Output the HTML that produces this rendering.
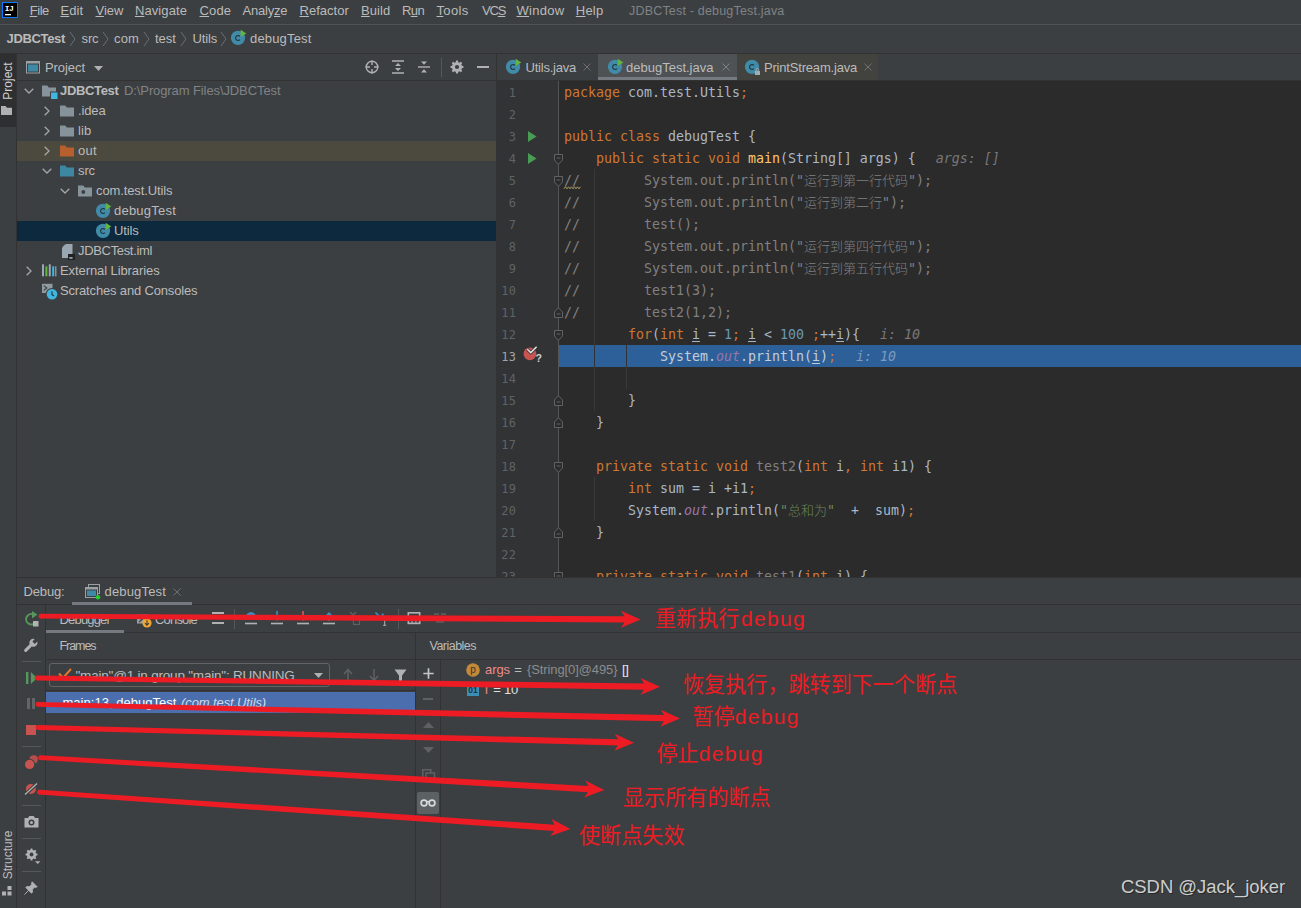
<!DOCTYPE html>
<html lang="zh">
<head>
<meta charset="utf-8">
<title>JDBCTest - debugTest.java</title>
<style>
html,body{margin:0;padding:0;}
body{width:1301px;height:908px;overflow:hidden;background:#3c3f41;position:relative;
 font-family:"Liberation Sans","Noto Sans CJK SC",sans-serif;font-size:13px;color:#bbbbbb;}
.abs{position:absolute;}
.t{position:absolute;white-space:pre;line-height:16px;height:16px;}
.t u{text-decoration:underline;text-underline-offset:1px;text-decoration-thickness:1px;}
svg{position:absolute;overflow:visible;}
.hl{position:absolute;height:1px;}
.vl{position:absolute;width:1px;}
.row{position:absolute;left:17px;width:479px;height:20px;}
#editor{left:496px;top:81px;width:805px;height:496px;background:#2b2b2b;overflow:hidden;}
#gutter{left:0;top:0;width:62px;height:496px;background:#313335;}
.ln{transform:scaleX(0.94);transform-origin:100% 50%;position:absolute;left:0;width:20.3px;letter-spacing:0.3px;text-align:right;font-family:"DejaVu Sans Mono","Liberation Mono",monospace;font-size:12.7px;color:#606366;line-height:22px;height:22px;white-space:pre;}
.cl{position:absolute;left:68px;white-space:pre;font-family:"DejaVu Sans Mono","Liberation Mono","Noto Sans CJK SC",monospace;font-size:13.29px;line-height:22px;height:22px;color:#a9b7c6;}
.cl b{font-weight:300;font-size:13px;}
.k{color:#cc7832;}
.s{color:#6a8759;}
.n{color:#6897bb;}
.c{color:#808080;}
.h{color:#787878;font-style:italic;}
.f{color:#9876aa;font-style:italic;}
.g{color:#808080;}
.m{color:#ffc66d;}
.u{text-decoration:underline;text-underline-offset:2px;}

</style>
</head>
<body>
<div class="abs" style="left:0;top:0;width:1301px;height:24px;background:#3c3f41;"></div>
<svg style="left:2px;top:2px" width="16" height="16" viewBox="0 0 16 16"><rect x="0.5" y="0.5" width="15" height="15" fill="#000" stroke="#087cfa" stroke-width="1"/><rect x="3" y="12" width="6" height="1.3" fill="#fff"/><text x="2.8" y="8.8" font-family="Liberation Mono,monospace" font-weight="bold" font-size="8" letter-spacing="-0.6" fill="#fff">IJ</text></svg>
<span class="t" style="left:29.7px;top:2.5px;font-size:13px;color:#bbbbbb;letter-spacing:-0.44px;"><u>F</u>ile</span>
<span class="t" style="left:60.4px;top:2.5px;font-size:13px;color:#bbbbbb;letter-spacing:0.12px;"><u>E</u>dit</span>
<span class="t" style="left:95.5px;top:2.5px;font-size:13px;color:#bbbbbb;letter-spacing:-0.04px;"><u>V</u>iew</span>
<span class="t" style="left:134.9px;top:2.5px;font-size:13px;color:#bbbbbb;letter-spacing:0.11px;"><u>N</u>avigate</span>
<span class="t" style="left:199.5px;top:2.5px;font-size:13px;color:#bbbbbb;letter-spacing:0.13px;"><u>C</u>ode</span>
<span class="t" style="left:242.5px;top:2.5px;font-size:13px;color:#bbbbbb;letter-spacing:-0.21px;">Analy<u>z</u>e</span>
<span class="t" style="left:299.5px;top:2.5px;font-size:13px;color:#bbbbbb;letter-spacing:0.03px;"><u>R</u>efactor</span>
<span class="t" style="left:361.0px;top:2.5px;font-size:13px;color:#bbbbbb;letter-spacing:0.08px;"><u>B</u>uild</span>
<span class="t" style="left:402.0px;top:2.5px;font-size:13px;color:#bbbbbb;letter-spacing:-0.62px;">R<u>u</u>n</span>
<span class="t" style="left:436.5px;top:2.5px;font-size:13px;color:#bbbbbb;letter-spacing:0.35px;"><u>T</u>ools</span>
<span class="t" style="left:482.0px;top:2.5px;font-size:13px;color:#bbbbbb;letter-spacing:-1.14px;">VC<u>S</u></span>
<span class="t" style="left:516.5px;top:2.5px;font-size:13px;color:#bbbbbb;letter-spacing:0.26px;"><u>W</u>indow</span>
<span class="t" style="left:575.8px;top:2.5px;font-size:13px;color:#bbbbbb;letter-spacing:0.19px;"><u>H</u>elp</span>
<span class="t" style="left:629.0px;top:2.5px;font-size:12.5px;color:#7f8385;letter-spacing:0.19px;">JDBCTest - debugTest.java</span>
<div class="hl" style="left:0;top:24px;width:1301px;background:#515456;"></div>
<span class="t" style="left:6.5px;top:30.5px;font-size:13px;color:#bbbbbb;letter-spacing:-0.33px;font-weight:bold;">JDBCTest</span>
<svg style="left:69px;top:30.5px" width="7" height="16" viewBox="0 0 7 16"><path d="M1 1 L6 8 L1 15" fill="none" stroke="#6b6e70" stroke-width="1"/></svg>
<span class="t" style="left:81.5px;top:30.5px;font-size:13px;color:#bbbbbb;letter-spacing:-0.11px;">src</span>
<svg style="left:101.5px;top:30.5px" width="7" height="16" viewBox="0 0 7 16"><path d="M1 1 L6 8 L1 15" fill="none" stroke="#6b6e70" stroke-width="1"/></svg>
<span class="t" style="left:114.0px;top:30.5px;font-size:13px;color:#bbbbbb;letter-spacing:0.15px;">com</span>
<svg style="left:143px;top:30.5px" width="7" height="16" viewBox="0 0 7 16"><path d="M1 1 L6 8 L1 15" fill="none" stroke="#6b6e70" stroke-width="1"/></svg>
<span class="t" style="left:155.0px;top:30.5px;font-size:13px;color:#bbbbbb;letter-spacing:0.01px;">test</span>
<svg style="left:180px;top:30.5px" width="7" height="16" viewBox="0 0 7 16"><path d="M1 1 L6 8 L1 15" fill="none" stroke="#6b6e70" stroke-width="1"/></svg>
<span class="t" style="left:192.5px;top:30.5px;font-size:13px;color:#bbbbbb;letter-spacing:-0.16px;">Utils</span>
<svg style="left:220px;top:30.5px" width="7" height="16" viewBox="0 0 7 16"><path d="M1 1 L6 8 L1 15" fill="none" stroke="#6b6e70" stroke-width="1"/></svg>
<svg style="left:230px;top:30.2px" width="17" height="17" viewBox="0 0 17 17"><circle cx="8" cy="7.85" r="7.15" fill="#3f8ba8"/><path d="M9.95 6.45 A2.45 2.45 0 1 0 9.95 9.55" fill="none" stroke="#243842" stroke-width="1.15"/><path d="M10.7 -0.2 L16.3 3.4 L10.7 7 Z" fill="#62b543"/></svg>
<span class="t" style="left:250.0px;top:30.5px;font-size:13px;color:#bbbbbb;letter-spacing:0.17px;">debugTest</span>
<div class="hl" style="left:0;top:53px;width:1301px;background:#323232;"></div>
<div class="abs" style="left:0;top:54px;width:17px;height:854px;background:#3c3f41;"></div>
<div class="abs" style="left:0;top:54px;width:16px;height:73px;background:#2d2f30;"></div>
<div class="vl" style="left:16px;top:54px;height:854px;background:#323232;"></div>
<span class="t" style="left:-22.5px;top:73px;width:60px;text-align:center;font-size:12px;color:#d0d0d0;transform:rotate(-90deg);">Project</span>
<svg style="left:1px;top:106px" width="12" height="9" viewBox="0 0 12 9"><path d="M0 0 H4.5 L6 1.8 H11 V9 H0 Z" fill="#afb1b3"/></svg>
<span class="t" style="left:-27.5px;top:847.3px;width:70px;text-align:center;font-size:12px;color:#bbbbbb;transform:rotate(-90deg);">Structure</span>
<svg style="left:2px;top:885.5px" width="10" height="10" viewBox="0 0 10 10"><rect x="0" y="5.5" width="4" height="4" fill="#afb1b3"/><rect x="5.5" y="5.5" width="4" height="4" fill="#afb1b3"/><rect x="5.5" y="0" width="4" height="4" fill="#afb1b3"/></svg>
<div class="abs" style="left:17px;top:54px;width:479px;height:26px;background:#3c3f41;"></div>
<svg style="left:26px;top:61px" width="14" height="13" viewBox="0 0 14 13"><rect x="0.5" y="0.5" width="13" height="11.5" fill="#3c3f41" stroke="#9aa0a4" stroke-width="1"/><rect x="0.5" y="0.5" width="13" height="2" fill="#9aa0a4"/><rect x="2" y="3.5" width="10" height="7" fill="#3d89a6"/></svg>
<span class="t" style="left:45.0px;top:60.0px;font-size:13px;color:#bbbbbb;letter-spacing:-0.07px;">Project</span>
<svg style="left:94px;top:65.7px" width="9" height="5" viewBox="0 0 9 5"><path d="M0 0 H9 L4.5 5 Z" fill="#afb1b3"/></svg>
<svg style="left:365px;top:60px" width="14" height="14" viewBox="0 0 14 14"><circle cx="7" cy="7" r="5.8" fill="none" stroke="#afb1b3" stroke-width="1.4"/><path d="M7 0.5 V5 M7 9 V13.5 M0.5 7 H5 M9 7 H13.5" stroke="#afb1b3" stroke-width="1.4"/></svg>
<svg style="left:391px;top:60px" width="14" height="14" viewBox="0 0 14 14"><path d="M1 1 H13 M1 13 H13" stroke="#afb1b3" stroke-width="1.4"/><path d="M4 6 L7 3 L10 6 Z M4 8 L7 11 L10 8 Z" fill="#afb1b3"/></svg>
<svg style="left:417px;top:60px" width="14" height="14" viewBox="0 0 14 14"><path d="M1 7 H13" stroke="#afb1b3" stroke-width="1.4"/><path d="M4 1.5 L7 4.8 L10 1.5 Z M4 12.5 L7 9.2 L10 12.5 Z" fill="#afb1b3"/></svg>
<div class="vl" style="left:441px;top:58px;height:19px;background:#555759;"></div>
<svg style="left:450px;top:60px" width="14" height="14" viewBox="0 0 14 14"><path d="M6.1 0.6 h1.8 l0.35 1.55 a5 5 0 0 1 1.3 0.55 l1.35-0.85 1.27 1.27 -0.85 1.35 a5 5 0 0 1 0.55 1.3 l1.55 0.35 v1.8 l-1.55 0.35 a5 5 0 0 1 -0.55 1.3 l0.85 1.35 -1.27 1.27 -1.35-0.85 a5 5 0 0 1 -1.3 0.55 l-0.35 1.55 h-1.8 l-0.35-1.55 a5 5 0 0 1 -1.3-0.55 l-1.35 0.85 -1.27-1.27 0.85-1.35 a5 5 0 0 1 -0.55-1.3 l-1.55-0.35 v-1.8 l1.55-0.35 a5 5 0 0 1 0.55-1.3 l-0.85-1.35 1.27-1.27 1.35 0.85 a5 5 0 0 1 1.3-0.55 Z M7 4.9 a2.1 2.1 0 1 0 0 4.2 a2.1 2.1 0 1 0 0 -4.2 Z" fill="#afb1b3" fill-rule="evenodd"/></svg>
<div class="abs" style="left:477px;top:66px;width:12px;height:2px;background:#afb1b3;"></div>
<div class="hl" style="left:17px;top:80px;width:479px;background:#323232;"></div>
<div class="abs" style="left:17px;top:141px;width:479px;height:20px;background:#4c493e;"></div>
<div class="abs" style="left:17px;top:221px;width:479px;height:20px;background:#0d293e;"></div>
<svg style="left:24px;top:88px" width="10" height="6" viewBox="0 0 10 6"><path d="M0.7 0.7 L5 5 L9.3 0.7" fill="none" stroke="#a4a6a8" stroke-width="1.3"/></svg>
<svg style="left:41.5px;top:85px" width="14" height="12" viewBox="0 0 14 12"><path d="M0 0.5 H5.2 L6.8 2.5 H14 V11.5 H0 Z" fill="#87939a"/><rect x="8" y="6.5" width="7.5" height="7.5" fill="#3c3f41"/><rect x="9" y="7.5" width="6.5" height="6.5" fill="#40b6e0"/></svg>
<span class="t" style="left:60.0px;top:83.0px;font-size:13px;color:#bbbbbb;letter-spacing:-0.33px;font-weight:bold;">JDBCTest</span>
<span class="t" style="left:124.0px;top:83.0px;font-size:13px;color:#808385;letter-spacing:-0.10px;">D:\Program Files\JDBCTest</span>
<svg style="left:43.5px;top:106px" width="6" height="10" viewBox="0 0 6 10"><path d="M0.7 0.7 L5 5 L0.7 9.3" fill="none" stroke="#a4a6a8" stroke-width="1.3"/></svg>
<svg style="left:60px;top:105px" width="14" height="12" viewBox="0 0 14 12"><path d="M0 0.5 H5.2 L6.8 2.5 H14 V11.5 H0 Z" fill="#87939a"/></svg>
<span class="t" style="left:78.0px;top:103.0px;font-size:13px;color:#bbbbbb;letter-spacing:-0.14px;">.idea</span>
<svg style="left:43.5px;top:126px" width="6" height="10" viewBox="0 0 6 10"><path d="M0.7 0.7 L5 5 L0.7 9.3" fill="none" stroke="#a4a6a8" stroke-width="1.3"/></svg>
<svg style="left:60px;top:125px" width="14" height="12" viewBox="0 0 14 12"><path d="M0 0.5 H5.2 L6.8 2.5 H14 V11.5 H0 Z" fill="#87939a"/></svg>
<span class="t" style="left:78.0px;top:123.0px;font-size:13px;color:#bbbbbb;letter-spacing:0.16px;">lib</span>
<svg style="left:43.5px;top:146px" width="6" height="10" viewBox="0 0 6 10"><path d="M0.7 0.7 L5 5 L0.7 9.3" fill="none" stroke="#a4a6a8" stroke-width="1.3"/></svg>
<svg style="left:60px;top:145px" width="14" height="12" viewBox="0 0 14 12"><path d="M0 0.5 H5.2 L6.8 2.5 H14 V11.5 H0 Z" fill="#b85f2e"/></svg>
<span class="t" style="left:78.0px;top:143.0px;font-size:13px;color:#bbbbbb;letter-spacing:0.31px;">out</span>
<svg style="left:42px;top:168px" width="10" height="6" viewBox="0 0 10 6"><path d="M0.7 0.7 L5 5 L9.3 0.7" fill="none" stroke="#a4a6a8" stroke-width="1.3"/></svg>
<svg style="left:60px;top:165px" width="14" height="12" viewBox="0 0 14 12"><path d="M0 0.5 H5.2 L6.8 2.5 H14 V11.5 H0 Z" fill="#3d87a3"/></svg>
<span class="t" style="left:78.0px;top:163.0px;font-size:13px;color:#bbbbbb;letter-spacing:-0.11px;">src</span>
<svg style="left:60px;top:188px" width="10" height="6" viewBox="0 0 10 6"><path d="M0.7 0.7 L5 5 L9.3 0.7" fill="none" stroke="#a4a6a8" stroke-width="1.3"/></svg>
<svg style="left:78px;top:185px" width="14" height="12" viewBox="0 0 14 12"><path d="M0 0.5 H5.2 L6.8 2.5 H14 V11.5 H0 Z" fill="#87939a"/><circle cx="5.3" cy="7" r="1.9" fill="#3c3f41"/></svg>
<span class="t" style="left:96.0px;top:183.0px;font-size:13px;color:#bbbbbb;letter-spacing:-0.11px;">com.test.Utils</span>
<svg style="left:95px;top:203px" width="17" height="17" viewBox="0 0 17 17"><circle cx="8" cy="7.85" r="7.15" fill="#3f8ba8"/><path d="M9.95 6.45 A2.45 2.45 0 1 0 9.95 9.55" fill="none" stroke="#243842" stroke-width="1.15"/><path d="M10.7 -0.2 L16.3 3.4 L10.7 7 Z" fill="#62b543"/></svg>
<span class="t" style="left:114.0px;top:203.0px;font-size:13px;color:#bbbbbb;letter-spacing:0.22px;">debugTest</span>
<svg style="left:95px;top:223px" width="17" height="17" viewBox="0 0 17 17"><circle cx="8" cy="7.85" r="7.15" fill="#3f8ba8"/><path d="M9.95 6.45 A2.45 2.45 0 1 0 9.95 9.55" fill="none" stroke="#243842" stroke-width="1.15"/><path d="M10.7 -0.2 L16.3 3.4 L10.7 7 Z" fill="#62b543"/></svg>
<span class="t" style="left:114.0px;top:223.0px;font-size:13px;color:#bbbbbb;letter-spacing:-0.16px;">Utils</span>
<svg style="left:61px;top:244px" width="15" height="16" viewBox="0 0 15 16"><path d="M5 0 H11.5 V14 H1 V4 Z" fill="#9aa7b0"/><path d="M4.2 0 V3.2 H1 Z" fill="#9aa7b0" opacity="0.7"/><rect x="7" y="10" width="7" height="6" fill="#1f2224"/><rect x="8.2" y="13.4" width="3.4" height="1.1" fill="#e8e8e8"/></svg>
<span class="t" style="left:78.0px;top:243.0px;font-size:13px;color:#bbbbbb;letter-spacing:-0.33px;">JDBCTest.iml</span>
<svg style="left:25.5px;top:266px" width="6" height="10" viewBox="0 0 6 10"><path d="M0.7 0.7 L5 5 L0.7 9.3" fill="none" stroke="#a4a6a8" stroke-width="1.3"/></svg>
<svg style="left:42px;top:264px" width="15" height="13" viewBox="0 0 15 13"><rect x="0" y="0.3" width="2" height="12" fill="#9aa7b0"/><rect x="3.4" y="2.3" width="2" height="10" fill="#62b543"/><rect x="6.8" y="0.3" width="2" height="12" fill="#9aa7b0"/><rect x="10.2" y="2.3" width="2" height="10" fill="#40b6e0"/><rect x="13.2" y="2.3" width="1.2" height="10" fill="#9aa7b0"/></svg>
<span class="t" style="left:60.0px;top:263.0px;font-size:13px;color:#bbbbbb;letter-spacing:-0.09px;">External Libraries</span>
<svg style="left:42px;top:283px" width="16" height="17" viewBox="0 0 16 17"><path d="M0 0.8 H10.5 V10 H0 Z" fill="#8f9aa1"/><path d="M1.8 2.6 L4.8 5 L1.8 7.4" fill="none" stroke="#3c3f41" stroke-width="1.1"/><circle cx="10" cy="11.3" r="6.3" fill="#3c3f41"/><circle cx="10" cy="11.3" r="5.3" fill="#40b6e0"/><path d="M10 8.2 V11.6 L12 13" fill="none" stroke="#2b3a42" stroke-width="1.2"/></svg>
<span class="t" style="left:60.0px;top:283.0px;font-size:13px;color:#bbbbbb;letter-spacing:-0.16px;">Scratches and Consoles</span>
<div class="vl" style="left:496px;top:54px;height:523px;background:#323232;"></div>
<div class="abs" style="left:497px;top:54px;width:804px;height:26px;background:#3c3f41;"></div>
<div class="abs" style="left:598px;top:54px;width:139px;height:26px;background:#4e5254;"></div>
<div class="abs" style="left:598px;top:77px;width:139px;height:3px;background:#747a80;"></div>
<div class="abs" style="left:737px;top:54px;width:141px;height:26px;background:#42433e;"></div>
<div class="hl" style="left:497px;top:80px;width:804px;background:#323232;"></div>
<svg style="left:505px;top:59px" width="17" height="17" viewBox="0 0 17 17"><circle cx="8" cy="7.85" r="7.15" fill="#3f8ba8"/><path d="M9.95 6.45 A2.45 2.45 0 1 0 9.95 9.55" fill="none" stroke="#243842" stroke-width="1.15"/><path d="M10.7 -0.2 L16.3 3.4 L10.7 7 Z" fill="#62b543"/></svg>
<span class="t" style="left:525.5px;top:59.8px;font-size:13px;color:#bbbbbb;letter-spacing:-0.22px;">Utils.java</span>
<svg style="left:583px;top:63px" width="8" height="8" viewBox="0 0 8 8"><path d="M0.5 0.5 L7.5 7.5 M7.5 0.5 L0.5 7.5" stroke="#6e7073" stroke-width="1" fill="none"/></svg>
<svg style="left:607.4px;top:59px" width="17" height="17" viewBox="0 0 17 17"><circle cx="8" cy="7.85" r="7.15" fill="#3f8ba8"/><path d="M9.95 6.45 A2.45 2.45 0 1 0 9.95 9.55" fill="none" stroke="#243842" stroke-width="1.15"/><path d="M10.7 -0.2 L16.3 3.4 L10.7 7 Z" fill="#62b543"/></svg>
<span class="t" style="left:626.0px;top:59.8px;font-size:13px;color:#bbbbbb;letter-spacing:0.00px;">debugTest.java</span>
<svg style="left:721.5px;top:63px" width="8" height="8" viewBox="0 0 8 8"><path d="M0.5 0.5 L7.5 7.5 M7.5 0.5 L0.5 7.5" stroke="#7e8285" stroke-width="1" fill="none"/></svg>
<svg style="left:744px;top:59px" width="17" height="17" viewBox="0 0 17 17"><circle cx="8" cy="7.85" r="7.15" fill="#3f8ba8"/><path d="M9.95 6.45 A2.45 2.45 0 1 0 9.95 9.55" fill="none" stroke="#243842" stroke-width="1.15"/><rect x="10.9" y="12" width="5.1" height="4" fill="#a3adb6"/><path d="M12.2 12.2 v-1.6 a1.25 1.25 0 0 1 2.5 0 v1.6" fill="none" stroke="#a3adb6" stroke-width="1"/></svg>
<span class="t" style="left:764.0px;top:59.8px;font-size:13px;color:#bbbbbb;letter-spacing:-0.19px;">PrintStream.java</span>
<svg style="left:864px;top:63px" width="8" height="8" viewBox="0 0 8 8"><path d="M0.5 0.5 L7.5 7.5 M7.5 0.5 L0.5 7.5" stroke="#6e7073" stroke-width="1" fill="none"/></svg>
<div id="editor" class="abs"><div id="gutter" class="abs"></div>
<div class="vl" style="left:62px;top:0;height:496px;background:#555555;"></div>
<div class="abs" style="left:63px;top:264px;width:742px;height:22px;background:#2d6099;"></div>
<div class="vl" style="left:98px;top:88px;height:242px;background:#393939;"></div>
<div class="vl" style="left:98px;top:264px;height:22px;background:#2e3338;"></div>
<div class="vl" style="left:130px;top:264px;height:44px;background:#3a3a3a;"></div>
<div class="vl" style="left:130px;top:264px;height:22px;background:#2e3338;"></div>
<div class="vl" style="left:98px;top:396px;height:44px;background:#393939;"></div>
<span class="ln" style="top:1px;color:#606366">1</span>
<span class="cl" style="top:1px"><span class="k">package</span> com.test.Utils<span class="k">;</span></span>
<span class="ln" style="top:23px;color:#606366">2</span>
<span class="ln" style="top:45px;color:#606366">3</span>
<span class="cl" style="top:45px"><span class="k">public class</span> debugTest {</span>
<span class="ln" style="top:67px;color:#606366">4</span>
<span class="cl" style="top:67px">    <span class="k">public static void</span> <span class="m">main</span>(String[] args) {  <span class="h" style="margin-left:4px">args: []</span></span>
<span class="ln" style="top:89px;color:#606366">5</span>
<span class="cl" style="top:89px"><span class="c">//        System.out.println(&quot;</span><span class="c"><b>运行到第一行代码</b>&quot;);</span></span>
<span class="ln" style="top:111px;color:#606366">6</span>
<span class="cl" style="top:111px"><span class="c">//        System.out.println(&quot;</span><span class="c"><b>运行到第二行</b>&quot;);</span></span>
<span class="ln" style="top:133px;color:#606366">7</span>
<span class="cl" style="top:133px"><span class="c">//        test();</span></span>
<span class="ln" style="top:155px;color:#606366">8</span>
<span class="cl" style="top:155px"><span class="c">//        System.out.println(&quot;</span><span class="c"><b>运行到第四行代码</b>&quot;);</span></span>
<span class="ln" style="top:177px;color:#606366">9</span>
<span class="cl" style="top:177px"><span class="c">//        System.out.println(&quot;</span><span class="c"><b>运行到第五行代码</b>&quot;);</span></span>
<span class="ln" style="top:199px;color:#606366">10</span>
<span class="cl" style="top:199px"><span class="c">//        test1(3);</span></span>
<span class="ln" style="top:221px;color:#606366">11</span>
<span class="cl" style="top:221px"><span class="c">//        test2(1,2);</span></span>
<span class="ln" style="top:243px;color:#606366">12</span>
<span class="cl" style="top:243px">        <span class="k">for</span>(<span class="k">int</span> <span class="u">i</span> = <span class="n">1</span><span class="k">;</span> <span class="u">i</span> &lt; <span class="n">100</span> <span class="k">;</span>++<span class="u">i</span>){  <span class="h" style="margin-left:4px">i: 10</span></span>
<span class="ln" style="top:265px;color:#a4a3a3">13</span>
<span class="cl" style="top:265px">            <span style="color:#c4cdd6">System.</span><span class="f">out</span><span style="color:#c4cdd6">.println(<span class="u">i</span>)</span><span class="k">;</span>  <span class="h" style="color:#7a9cc0;margin-left:4px">i: 10</span></span>
<span class="ln" style="top:287px;color:#606366">14</span>
<span class="ln" style="top:309px;color:#606366">15</span>
<span class="cl" style="top:309px">        }</span>
<span class="ln" style="top:331px;color:#606366">16</span>
<span class="cl" style="top:331px">    }</span>
<span class="ln" style="top:353px;color:#606366">17</span>
<span class="ln" style="top:375px;color:#606366">18</span>
<span class="cl" style="top:375px">    <span class="k">private static void</span> <span class="g">test2</span>(<span class="k">int</span> i<span class="k">,</span> <span class="k">int</span> i1) {</span>
<span class="ln" style="top:397px;color:#606366">19</span>
<span class="cl" style="top:397px">        <span class="k">int</span> sum = i +i1<span class="k">;</span></span>
<span class="ln" style="top:419px;color:#606366">20</span>
<span class="cl" style="top:419px">        System.<span class="f">out</span>.println(<span class="s">&quot;</span><span class="s"><b>总和为</b>"</span>  +  sum)<span class="k">;</span></span>
<span class="ln" style="top:441px;color:#606366">21</span>
<span class="cl" style="top:441px">    }</span>
<span class="ln" style="top:463px;color:#606366">22</span>
<span class="ln" style="top:485px;color:#606366">23</span>
<span class="cl" style="top:485px">    <span class="k">private static void</span> <span class="g">test1</span>(<span class="k">int</span> i) {</span>
<svg style="left:32px;top:49.5px" width="9" height="11" viewBox="0 0 9 11"><path d="M0 0 L8.6 5.5 L0 11 Z" fill="#499c54"/></svg>
<svg style="left:32px;top:71.5px" width="9" height="11" viewBox="0 0 9 11"><path d="M0 0 L8.6 5.5 L0 11 Z" fill="#499c54"/></svg>
<svg style="left:58px;top:73px" width="9" height="11" viewBox="0 0 9 11"><path d="M0.5 0.5 H8.5 V6 L4.5 10.3 L0.5 6 Z" fill="#2b2b2b" stroke="#606366" stroke-width="1"/><path d="M2.5 4 H6.5" stroke="#606366" stroke-width="1"/></svg>
<svg style="left:58px;top:95px" width="9" height="11" viewBox="0 0 9 11"><path d="M0.5 0.5 H8.5 V6 L4.5 10.3 L0.5 6 Z" fill="#2b2b2b" stroke="#606366" stroke-width="1"/><path d="M2.5 4 H6.5" stroke="#606366" stroke-width="1"/></svg>
<svg style="left:58px;top:249px" width="9" height="11" viewBox="0 0 9 11"><path d="M0.5 0.5 H8.5 V6 L4.5 10.3 L0.5 6 Z" fill="#2b2b2b" stroke="#606366" stroke-width="1"/><path d="M2.5 4 H6.5" stroke="#606366" stroke-width="1"/></svg>
<svg style="left:58px;top:381px" width="9" height="11" viewBox="0 0 9 11"><path d="M0.5 0.5 H8.5 V6 L4.5 10.3 L0.5 6 Z" fill="#2b2b2b" stroke="#606366" stroke-width="1"/><path d="M2.5 4 H6.5" stroke="#606366" stroke-width="1"/></svg>
<svg style="left:58px;top:491px" width="9" height="11" viewBox="0 0 9 11"><path d="M0.5 0.5 H8.5 V6 L4.5 10.3 L0.5 6 Z" fill="#2b2b2b" stroke="#606366" stroke-width="1"/><path d="M2.5 4 H6.5" stroke="#606366" stroke-width="1"/></svg>
<svg style="left:58px;top:226px" width="9" height="11" viewBox="0 0 9 11"><path d="M0.5 10.5 H8.5 V5 L4.5 0.7 L0.5 5 Z" fill="#2b2b2b" stroke="#606366" stroke-width="1"/><path d="M2.5 7 H6.5" stroke="#606366" stroke-width="1"/></svg>
<svg style="left:58px;top:314px" width="9" height="11" viewBox="0 0 9 11"><path d="M0.5 10.5 H8.5 V5 L4.5 0.7 L0.5 5 Z" fill="#2b2b2b" stroke="#606366" stroke-width="1"/><path d="M2.5 7 H6.5" stroke="#606366" stroke-width="1"/></svg>
<svg style="left:58px;top:336px" width="9" height="11" viewBox="0 0 9 11"><path d="M0.5 10.5 H8.5 V5 L4.5 0.7 L0.5 5 Z" fill="#2b2b2b" stroke="#606366" stroke-width="1"/><path d="M2.5 7 H6.5" stroke="#606366" stroke-width="1"/></svg>
<svg style="left:58px;top:446px" width="9" height="11" viewBox="0 0 9 11"><path d="M0.5 10.5 H8.5 V5 L4.5 0.7 L0.5 5 Z" fill="#2b2b2b" stroke="#606366" stroke-width="1"/><path d="M2.5 7 H6.5" stroke="#606366" stroke-width="1"/></svg>
<svg style="left:27px;top:267px" width="20" height="16" viewBox="0 0 20 16"><circle cx="6.9" cy="5.8" r="6.4" fill="#c75450"/><path d="M4.3 1.3 L7.8 4.6 L13.6 -1.2" fill="none" stroke="#313335" stroke-width="3.2"/><path d="M4.3 1.3 L7.8 4.6 L13.6 -1.2" fill="none" stroke="#e4e4e4" stroke-width="1.5"/><text x="12.6" y="14.2" font-family="Liberation Sans,sans-serif" font-size="10.5" font-weight="bold" fill="#d0d0d0">?</text></svg>
<svg style="left:68px;top:105px" width="17" height="4" viewBox="0 0 17 4"><path d="M0 2.8 L1.5 0.8 L3 2.8 L4.5 0.8 L6 2.8 L7.5 0.8 L9 2.8 L10.5 0.8 L12 2.8 L13.5 0.8 L15 2.8 L16.5 0.8" fill="none" stroke="#b5a86a" stroke-width="0.9"/></svg></div>
<div class="abs" style="left:17px;top:577px;width:1284px;height:331px;background:#3c3f41;"></div>
<div class="hl" style="left:17px;top:577px;width:1284px;background:#323232;"></div>
<span class="t" style="left:23.5px;top:583.5px;font-size:13px;color:#bbbbbb;letter-spacing:-0.15px;">Debug:</span>
<svg style="left:85px;top:584px" width="16" height="16" viewBox="0 0 16 16"><rect x="3.5" y="0.5" width="11" height="9" fill="none" stroke="#9aa0a4" stroke-width="1"/><rect x="0.5" y="3.5" width="12" height="10" fill="#3c3f41" stroke="#9aa0a4" stroke-width="1"/><rect x="0.5" y="3.5" width="12" height="2" fill="#9aa0a4"/><rect x="2" y="6.5" width="9" height="5.5" fill="#3d89a6"/><circle cx="13" cy="13.2" r="2.2" fill="#22d02a"/></svg>
<span class="t" style="left:104.5px;top:583.5px;font-size:13px;color:#bbbbbb;letter-spacing:0.17px;">debugTest</span>
<svg style="left:173px;top:588px" width="8" height="8" viewBox="0 0 8 8"><path d="M0.5 0.5 L7.5 7.5 M7.5 0.5 L0.5 7.5" stroke="#6e7073" stroke-width="1" fill="none"/></svg>
<div class="abs" style="left:72px;top:602px;width:120px;height:3px;background:#747a80;"></div>
<div class="hl" style="left:17px;top:604px;width:1284px;background:#323232;"></div>
<div class="vl" style="left:45px;top:605px;height:303px;background:#323232;"></div>
<span class="t" style="left:59.5px;top:611.5px;font-size:13px;color:#bbbbbb;letter-spacing:-0.82px;">Debugger</span>
<div class="abs" style="left:46px;top:630px;width:78px;height:3px;background:#747a80;"></div>
<svg style="left:137px;top:612px" width="15" height="16" viewBox="0 0 15 16"><path d="M0 2.5 H11 V11.5 H0 Z" fill="#9aa0a4"/><path d="M2 5 L5 7.5 L2 10" fill="none" stroke="#3c3f41" stroke-width="1.2"/><circle cx="10" cy="11" r="4.6" fill="#f0a732"/><path d="M10 8.3 V13 M8 11.2 L10 13.3 L12 11.2" fill="none" stroke="#3c3f41" stroke-width="1.1"/></svg>
<span class="t" style="left:155.0px;top:611.5px;font-size:13px;color:#bbbbbb;letter-spacing:-0.81px;">Console</span>
<div class="abs" style="left:212px;top:612px;width:12px;height:2px;background:#afb1b3;"></div>
<div class="abs" style="left:212px;top:617px;width:12px;height:2px;background:#afb1b3;"></div>
<div class="abs" style="left:212px;top:622px;width:12px;height:2px;background:#afb1b3;"></div>
<div class="vl" style="left:234px;top:609px;height:20px;background:#555759;"></div>
<svg style="left:244px;top:610.5px" width="14" height="14" viewBox="0 0 14 14"><path d="M1 12.5 H13" stroke="#afb1b3" stroke-width="1.6"/><path d="M2 8 Q2.5 2.5 7 2.2 Q11.5 2.5 12 8" fill="none" stroke="#3592c4" stroke-width="1.7"/><path d="M3.6 4.6 L7 1 L10.4 4.6 Z" fill="#3592c4"/></svg>
<svg style="left:270px;top:610.5px" width="14" height="14" viewBox="0 0 14 14"><path d="M1 12.5 H13" stroke="#afb1b3" stroke-width="1.6"/><path d="M7 0 V8" stroke="#3592c4" stroke-width="1.6"/><path d="M3.5 6 L7 10 L10.5 6 Z" fill="#3592c4"/></svg>
<svg style="left:296px;top:610.5px" width="14" height="14" viewBox="0 0 14 14"><path d="M1 12.5 H13" stroke="#afb1b3" stroke-width="1.6"/><path d="M7 0 V8" stroke="#db5860" stroke-width="1.6"/><path d="M3.5 6 L7 10 L10.5 6 Z" fill="#db5860"/></svg>
<svg style="left:322px;top:610.5px" width="14" height="14" viewBox="0 0 14 14"><path d="M1 12.5 H13" stroke="#afb1b3" stroke-width="1.6"/><path d="M7 10 V3" stroke="#3592c4" stroke-width="1.6"/><path d="M2.2 6 L7 1 L11.8 6 Z" fill="#3592c4"/></svg>
<svg style="left:348px;top:610.5px" width="14" height="14" viewBox="0 0 14 14"><path d="M2 1 L8 7 M8 1 L2 7" stroke="#5e6062" stroke-width="1.5"/><rect x="5.5" y="7.5" width="6" height="6" fill="none" stroke="#5e6062" stroke-width="1.2"/></svg>
<svg style="left:374px;top:610.5px" width="14" height="14" viewBox="0 0 14 14"><path d="M1.5 1.5 L6.8 7 M6.8 7 L9.2 2.6" fill="none" stroke="#3592c4" stroke-width="1.8"/><path d="M9.2 8 H12.2 M10.7 8 V14.3 M9.2 14.3 H12.2" stroke="#afb1b3" stroke-width="1"/></svg>
<div class="vl" style="left:398px;top:609px;height:20px;background:#555759;"></div>
<svg style="left:407px;top:610.5px" width="14" height="14" viewBox="0 0 14 14"><rect x="1.3" y="1.8" width="11.4" height="10.6" fill="none" stroke="#afb1b3" stroke-width="1.6"/><path d="M1 5.6 H13 M5.1 5.6 V13 M8.9 5.6 V13 M1 9.2 H13" stroke="#afb1b3" stroke-width="1.1"/></svg>
<svg style="left:433px;top:610.5px" width="14" height="14" viewBox="0 0 14 14"><path d="M1 3 H6 M8 3 H13 M1 7 H6 M8 7 H13 M3 11 H11" stroke="#5e6062" stroke-width="1.5"/></svg>
<div class="hl" style="left:46px;top:632px;width:1255px;background:#323232;"></div>
<span class="t" style="left:59.5px;top:638.0px;font-size:12.5px;color:#bbbbbb;letter-spacing:-1.06px;">Frames</span>
<span class="t" style="left:429.5px;top:638.0px;font-size:12.5px;color:#bbbbbb;letter-spacing:-0.52px;">Variables</span>
<div class="hl" style="left:46px;top:659px;width:1255px;background:#323232;"></div>
<div class="vl" style="left:415px;top:633px;height:275px;background:#323232;"></div>
<div class="vl" style="left:440px;top:660px;height:248px;background:#323232;"></div>
<div class="abs" style="left:49px;top:663px;width:279px;height:22px;border:1px solid #646464;border-radius:3px;box-sizing:content-box;background:#3c3f41;"></div>
<svg style="left:57.5px;top:668px" width="14" height="12" viewBox="0 0 14 12"><path d="M1 5.5 L5 10 L13 1" fill="none" stroke="#e2762e" stroke-width="2"/></svg>
<span class="t" style="left:75.5px;top:668.0px;font-size:13.5px;color:#bbbbbb;letter-spacing:-0.20px;">&quot;main&quot;@1 in group &quot;main&quot;: RUNNING</span>
<svg style="left:314px;top:673px" width="9" height="5" viewBox="0 0 9 5"><path d="M0 0 H9 L4.5 5 Z" fill="#afb1b3"/></svg>
<svg style="left:343px;top:668px" width="10" height="14" viewBox="0 0 10 14"><path d="M5 13 V2 M1 6 L5 1.5 L9 6" fill="none" stroke="#5e6062" stroke-width="1.5"/></svg>
<svg style="left:369px;top:668px" width="10" height="14" viewBox="0 0 10 14"><path d="M5 1 V12 M1 8 L5 12.5 L9 8" fill="none" stroke="#5e6062" stroke-width="1.5"/></svg>
<svg style="left:394px;top:669px" width="13" height="13" viewBox="0 0 13 13"><path d="M0.5 0.5 H12.5 L8 6.5 V12.5 H5 V6.5 Z" fill="#afb1b3"/></svg>
<div class="hl" style="left:46px;top:690px;width:369px;background:#323232;"></div>
<div class="abs" style="left:46px;top:692px;width:369px;height:21px;background:#4b6eaf;"></div>
<span class="t" style="left:62.5px;top:695.0px;font-size:13px;color:#ffffff;letter-spacing:0.03px;">main:13, debugTest</span>
<span class="t" style="left:181.0px;top:695.0px;font-size:13px;color:#d0d8e8;letter-spacing:-0.10px;font-style:italic;">(com.test.Utils)</span>
<svg style="left:422.5px;top:667.5px" width="11" height="11" viewBox="0 0 11 11"><path d="M5.5 0.3 V10.7 M0.3 5.5 H10.7" stroke="#c4c6c8" stroke-width="1.7"/></svg>
<div class="abs" style="left:423px;top:698px;width:10px;height:2px;background:#5e6062;"></div>
<svg style="left:423px;top:722px" width="11" height="6" viewBox="0 0 11 6"><path d="M0 6 L5.5 0 L11 6 Z" fill="#5e6062"/></svg>
<svg style="left:423px;top:747px" width="11" height="6" viewBox="0 0 11 6"><path d="M0 0 L5.5 6 L11 0 Z" fill="#5e6062"/></svg>
<svg style="left:422px;top:769px" width="13" height="13" viewBox="0 0 13 13"><rect x="0.75" y="0.75" width="8" height="8" fill="none" stroke="#5e6062" stroke-width="1.5"/><rect x="4" y="4" width="8.5" height="8.5" fill="#3c3f41" stroke="#5e6062" stroke-width="1.5"/></svg>
<div class="abs" style="left:417px;top:792px;width:22px;height:22px;background:#5c6164;border-radius:2px;"></div>
<svg style="left:420px;top:798px" width="16" height="9" viewBox="0 0 16 9"><circle cx="4" cy="5" r="2.9" fill="none" stroke="#d6d8da" stroke-width="1.7"/><circle cx="12" cy="5" r="2.9" fill="none" stroke="#d6d8da" stroke-width="1.7"/><path d="M6.5 4 Q8 3 9.5 4" fill="none" stroke="#d6d8da" stroke-width="1.3"/></svg>
<svg style="left:466px;top:663px" width="14" height="14" viewBox="0 0 14 14"><circle cx="7" cy="7" r="6.8" fill="#c18a3a"/><text x="7" y="10" text-anchor="middle" font-family="Liberation Sans,sans-serif" font-size="10" fill="#3c3020">p</text></svg>
<span class="t" style="left:485.0px;top:661.5px;font-size:13px;color:#ee8b8b;letter-spacing:-0.07px;">args</span>
<span class="t" style="left:511.0px;top:661.5px;font-size:13px;color:#bbbbbb;letter-spacing:-0.27px;"> = </span>
<span class="t" style="left:527.0px;top:661.5px;font-size:13px;color:#8a8c8e;letter-spacing:-0.10px;">{String[0]@495}</span>
<span class="t" style="left:622.0px;top:661.5px;font-size:13px;color:#e8e8e8;letter-spacing:-0.36px;">[]</span>
<svg style="left:467px;top:684px" width="12" height="12" viewBox="0 0 12 12"><rect width="12" height="12" fill="#3c8fb4"/><text x="6" y="9.3" text-anchor="middle" font-family="Liberation Sans,sans-serif" font-size="8.5" fill="#1d3340" font-weight="bold">01</text></svg>
<span class="t" style="left:485.0px;top:682.0px;font-size:13px;color:#ee8b8b;letter-spacing:0.11px;">i</span>
<span class="t" style="left:490.0px;top:682.0px;font-size:13px;color:#e0e0e0;letter-spacing:-0.26px;"> = 10</span>
<svg style="left:24px;top:611px" width="15" height="16" viewBox="0 0 15 16"><path d="M9.5 3.5 A5.2 5.2 0 1 0 12 10.5" fill="none" stroke="#57965c" stroke-width="2"/><path d="M8 0 L13.5 3.6 L8 7.5 Z" fill="#57965c"/><rect x="9" y="10" width="5.5" height="5.5" fill="#afb1b3"/></svg>
<svg style="left:24px;top:638px" width="14" height="14" viewBox="0 0 14 14"><path d="M13.3 3.6 L10.8 6 L8.4 3.5 L10.7 1 A4 4 0 0 0 5.6 6.2 L0.6 11.2 A1.5 1.5 0 0 0 2.8 13.4 L7.8 8.4 A4 4 0 0 0 13.3 3.6 Z" fill="#afb1b3"/></svg>
<div class="hl" style="left:22px;top:661px;width:19px;background:#555759;"></div>
<svg style="left:26px;top:671.5px" width="12" height="12" viewBox="0 0 12 12"><rect x="0" y="0" width="2.4" height="12" fill="#57965c"/><path d="M4.8 0 L11.2 6 L4.8 12 Z" fill="#57965c"/></svg>
<svg style="left:27px;top:698px" width="9" height="11" viewBox="0 0 9 11"><rect x="0" y="0" width="3" height="11" fill="#626567"/><rect x="5" y="0" width="3" height="11" fill="#626567"/></svg>
<div class="abs" style="left:26px;top:725px;width:10px;height:10px;background:#c75450;"></div>
<div class="hl" style="left:22px;top:746px;width:19px;background:#555759;"></div>
<svg style="left:24px;top:755px" width="15" height="15" viewBox="0 0 15 15"><circle cx="9.7" cy="4.4" r="4.1" fill="#c75450" opacity="0.85"/><circle cx="5.6" cy="9.4" r="5.6" fill="#3c3f41"/><circle cx="5.6" cy="9.4" r="4.6" fill="#c75450"/></svg>
<svg style="left:24px;top:782px" width="15" height="15" viewBox="0 0 15 15"><circle cx="6.9" cy="7" r="5" fill="#c75450"/><path d="M0.6 13 L13.4 1.2" stroke="#3c3f41" stroke-width="3.4"/><path d="M1 12.6 L13 1.5" stroke="#afb1b3" stroke-width="1.3"/></svg>
<div class="hl" style="left:22px;top:805px;width:19px;background:#555759;"></div>
<svg style="left:24px;top:815px" width="15" height="13" viewBox="0 0 15 13"><path d="M0.5 3 H4 L5.3 1 H9.7 L11 3 H14.5 V12.5 H0.5 Z" fill="#afb1b3"/><circle cx="7.5" cy="7.5" r="3" fill="#3c3f41"/><circle cx="7.5" cy="7.5" r="1.5" fill="#afb1b3"/></svg>
<svg style="left:24.5px;top:848px" width="16" height="16" viewBox="0 0 16 16"><g transform="scale(0.93)"><path d="M6.1 0.6 h1.8 l0.35 1.55 a5 5 0 0 1 1.3 0.55 l1.35-0.85 1.27 1.27 -0.85 1.35 a5 5 0 0 1 0.55 1.3 l1.55 0.35 v1.8 l-1.55 0.35 a5 5 0 0 1 -0.55 1.3 l0.85 1.35 -1.27 1.27 -1.35-0.85 a5 5 0 0 1 -1.3 0.55 l-0.35 1.55 h-1.8 l-0.35-1.55 a5 5 0 0 1 -1.3-0.55 l-1.35 0.85 -1.27-1.27 0.85-1.35 a5 5 0 0 1 -0.55-1.3 l-1.55-0.35 v-1.8 l1.55-0.35 a5 5 0 0 1 0.55-1.3 l-0.85-1.35 1.27-1.27 1.35 0.85 a5 5 0 0 1 1.3-0.55 Z M7 4.9 a2.1 2.1 0 1 0 0 4.2 a2.1 2.1 0 1 0 0 -4.2 Z" fill="#afb1b3" fill-rule="evenodd"/></g><path d="M10 13.2 H15.4 L12.7 16 Z" fill="#afb1b3"/></svg>
<div class="hl" style="left:22px;top:838px;width:19px;background:#555759;"></div>
<div class="hl" style="left:22px;top:871px;width:19px;background:#555759;"></div>
<svg style="left:24px;top:881px" width="14" height="14" viewBox="0 0 14 14"><path d="M8.2 0.8 L13.2 5.8 L11.6 6.6 L10.4 6.2 L8.4 8.6 L8.6 11.2 L7.4 12.2 L4.6 9.4 L1 13 L0.6 13.4 L4.6 9.4 L1.8 6.6 L2.8 5.4 L5.4 5.6 L7.8 3.6 L7.4 2.4 Z" fill="#afb1b3" stroke="#afb1b3" stroke-width="0.8"/></svg>
<div class="abs" style="left:72px;top:602px;width:120px;height:3px;background:#747a80;"></div>
<div class="abs" style="left:46px;top:630px;width:78px;height:3px;background:#747a80;"></div>
<svg style="left:0;top:0" width="1301" height="908" viewBox="0 0 1301 908"><polygon points="41.0,618.6 624.5,622.4 621.0,627.8 640.5,619.4 621.0,610.8 624.5,616.2 41.0,613.8" fill="#ed1c24"/><circle cx="41.0" cy="616.2" r="2.45" fill="#ed1c24"/><polygon points="37.0,680.4 644.0,689.7 640.4,695.0 660.0,686.8 640.6,678.0 644.0,683.5 37.0,675.6" fill="#ed1c24"/><circle cx="37.0" cy="678.0" r="2.45" fill="#ed1c24"/><polygon points="37.9,706.7 663.9,721.3 660.3,726.7 680.0,718.6 660.7,709.7 664.1,715.1 38.1,701.9" fill="#ed1c24"/><circle cx="38.0" cy="704.3" r="2.45" fill="#ed1c24"/><polygon points="37.9,729.9 617.9,745.5 614.3,750.8 634.0,742.8 614.7,733.8 618.1,739.3 38.1,725.1" fill="#ed1c24"/><circle cx="38.0" cy="727.5" r="2.45" fill="#ed1c24"/><polygon points="40.4,760.1 588.0,792.2 584.2,797.4 604.2,790.0 585.2,780.4 588.4,786.0 40.6,755.3" fill="#ed1c24"/><circle cx="40.5" cy="757.7" r="2.45" fill="#ed1c24"/><polygon points="39.3,794.6 554.2,830.9 550.4,836.0 570.4,828.9 551.5,819.1 554.7,824.7 39.7,789.8" fill="#ed1c24"/><circle cx="39.5" cy="792.2" r="2.45" fill="#ed1c24"/></svg>
<span class="t" style="left:655px;top:603px;line-height:32px;height:32px;font-size:21.1px;color:#ed1c24;font-family:'Liberation Sans','Noto Sans CJK SC',sans-serif;">重新执行<span style="letter-spacing:1.3px;margin-left:1.5px">debug</span></span>
<span class="t" style="left:683px;top:668.5px;line-height:32px;height:32px;font-size:21.1px;color:#ed1c24;font-family:'Liberation Sans','Noto Sans CJK SC',sans-serif;">恢复执行，跳转到下一个断点</span>
<span class="t" style="left:692.5px;top:701px;line-height:32px;height:32px;font-size:21.1px;color:#ed1c24;font-family:'Liberation Sans','Noto Sans CJK SC',sans-serif;">暂停<span style="letter-spacing:1.3px">debug</span></span>
<span class="t" style="left:656.5px;top:737.5px;line-height:32px;height:32px;font-size:21.1px;color:#ed1c24;font-family:'Liberation Sans','Noto Sans CJK SC',sans-serif;">停止<span style="letter-spacing:1.3px">debug</span></span>
<span class="t" style="left:623px;top:782px;line-height:32px;height:32px;font-size:21.1px;color:#ed1c24;font-family:'Liberation Sans','Noto Sans CJK SC',sans-serif;">显示所有的断点</span>
<span class="t" style="left:579px;top:820.2px;line-height:32px;height:32px;font-size:21.1px;color:#ed1c24;font-family:'Liberation Sans','Noto Sans CJK SC',sans-serif;">使断点失效</span>
<span class="t" style="left:1121px;top:876px;line-height:22px;height:22px;font-size:18.45px;color:#cdcdcd;text-shadow:1px 1px 0 rgba(20,20,20,0.55);">CSDN @Jack_joker</span>
</body>
</html>
